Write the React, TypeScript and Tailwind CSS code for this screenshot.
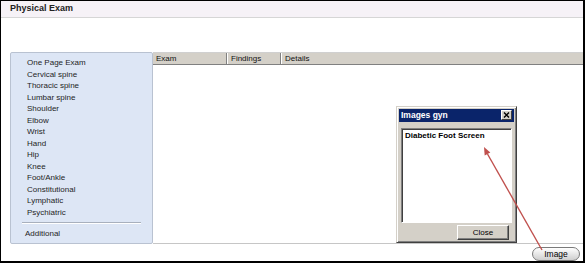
const bodyParts = [
  "One Page Exam",
  "Cervical spine",
  "Thoracic spine",
  "Lumbar spine",
  "Shoulder",
  "Elbow",
  "Wrist",
  "Hand",
  "Hip",
  "Knee",
  "Foot/Ankle",
  "Constitutional",
  "Lymphatic",
  "Psychiatric",
];

function ImagesDialog() {
  return (
    <div className="absolute left-[395px] top-[105px] w-[121px] h-[137px] flex flex-col bg-[#d4d0c8] border border-[#d4d0c8] border-r-[#404040] border-b-[#404040] shadow-[inset_1px_1px_0_#ffffff,inset_-1px_-1px_0_#808080] p-[2px]">
      <div className="h-[13px] bg-[#0a246a] flex items-center justify-between pl-[2px] pr-[2px]">
        <span className="text-[8.5px] font-bold text-white leading-none">Images gyn</span>
        <div className="w-[11px] h-[10px] bg-[#d4d0c8] border border-white border-r-[#404040] border-b-[#404040] flex items-center justify-center">
          <svg width="7" height="6" viewBox="0 0 7 6">
            <path d="M1 0.5 L6 5.5 M6 0.5 L1 5.5" stroke="#000" strokeWidth="1.4" />
          </svg>
        </div>
      </div>
      <div className="mx-[2px] mt-[6px] h-[96px] bg-white border border-[#808080] border-r-white border-b-white shadow-[inset_1px_1px_0_#404040] pl-[3px] pt-[2px]">
        <div className="text-[8px] font-bold text-black leading-[10px]">Diabetic Foot Screen</div>
      </div>
      <div className="self-end mt-[2px] mr-[5px] w-[52px] h-[15px] bg-[#d4d0c8] border border-white border-r-[#404040] border-b-[#404040] shadow-[inset_-1px_-1px_0_#808080] flex items-center justify-center text-[8px] text-black">
        Close
      </div>
    </div>
  );
}

function Arrow() {
  return (
    <svg className="absolute left-0 top-0 pointer-events-none" width="585" height="263" viewBox="0 0 585 263">
      <line x1="541" y1="249" x2="486.5" y2="153" stroke="#c0504d" strokeWidth="1.4" />
      <polygon points="483,146 489.3,151.4 483.7,154.6" fill="#c0504d" />
    </svg>
  );
}

export default function App() {
  return (
    <div className="relative w-[585px] h-[263px] bg-white border-l border-t border-r-2 border-b-2 border-black flex flex-col overflow-hidden font-['Liberation_Sans',Arial,sans-serif]">
      <div className="h-[17px] shrink-0 bg-[#f6f2f7] border-b border-[#d6d6d6] pl-[9px] flex items-center">
        <span className="text-[9px] font-bold text-[#222]">Physical Exam</span>
      </div>
      <div className="h-[34px] shrink-0" />
      <div className="h-[192px] shrink-0 flex">
        <div className="ml-[9px] w-[143px] bg-[#dde6f5] border border-[#b9c2d1] rounded-[2px] pt-[4px] flex flex-col">
          {bodyParts.map((p) => (
            <div key={p} className="pl-[16px] text-[8px] leading-[11.5px] text-[#1e1e1e]">
              {p}
            </div>
          ))}
          <div className="mt-[4px] mx-[11px] h-[2px] border-t border-[#a8b0bd] border-b border-b-white" />
          <div className="pl-[14px] mt-[4px] text-[8px] leading-[11px] text-[#1e1e1e]">Additional</div>
        </div>
        <div className="flex-1 flex flex-col border-t border-[#d0d0d0] border-b border-b-[#c6c6c6]">
          <div className="h-[12px] bg-[#d4d0c8] border-b border-[#808080] flex text-[8px] leading-[11px] text-[#111]">
            <div className="w-[74px] pl-[3px] border-r border-[#808080]">Exam</div>
            <div className="w-[54px] pl-[3px] border-l border-white border-r border-r-[#808080]">Findings</div>
            <div className="flex-1 pl-[3px] border-l border-white">Details</div>
          </div>
          <div className="flex-1" />
        </div>
      </div>
      <div className="flex-1 flex justify-end items-end pr-[3px]">
        <div className="w-[48px] h-[14px] rounded-full border border-[#7a7a7a] bg-gradient-to-b from-white to-[#cfcfcf] flex items-center justify-center text-[8.5px] text-black">
          Image
        </div>
      </div>
      <ImagesDialog />
      <Arrow />
    </div>
  );
}
